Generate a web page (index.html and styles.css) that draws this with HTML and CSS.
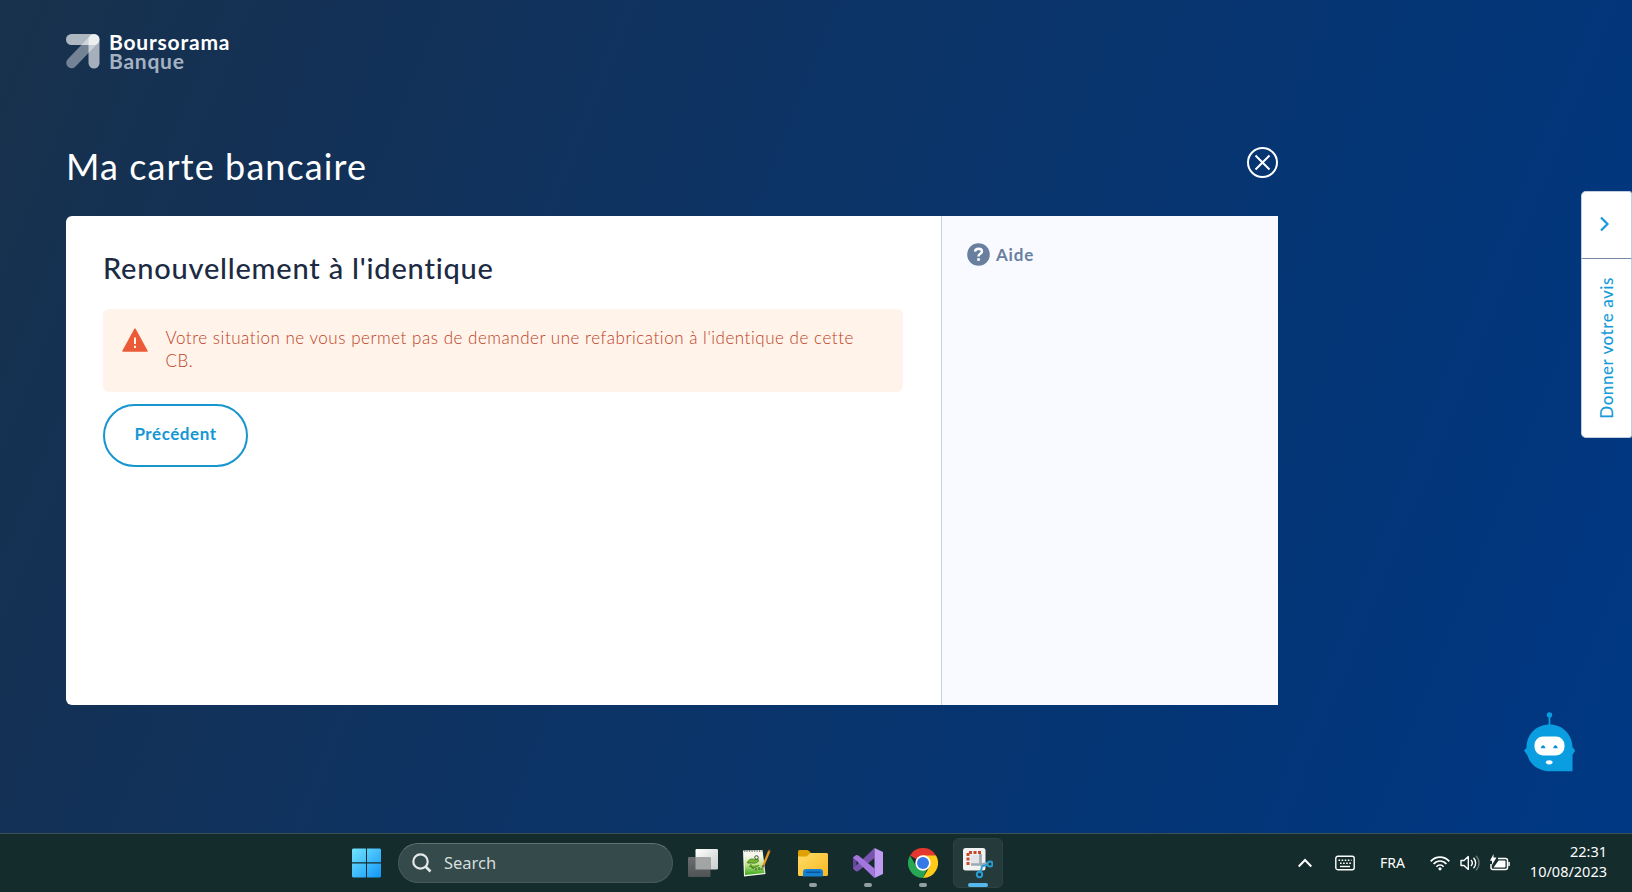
FILE: index.html
```html
<!DOCTYPE html>
<html lang="fr">
<head>
<meta charset="utf-8">
<title>Ma carte bancaire</title>
<link rel="stylesheet" href="styles.css">
</head>
<body>
<div class="screen">
  <main class="page">
    <header class="brand">
      <svg class="brand-mark" width="34" height="35" viewBox="0 0 34 35" fill="none" stroke="#fff" stroke-width="11" stroke-linecap="round">
        <path d="M5.500 5.500H28" stroke-opacity=".65"/>
        <path d="M28 5.500V29" stroke-opacity=".62"/>
        <path d="M28 5.500L5.500 29" stroke-opacity=".4" stroke-width="10.500"/>
      </svg>
      <div class="brand-name"><span class="brand-top">Boursorama</span><span class="brand-sub">Banque</span></div>
    </header>
    <div class="title-row">
      <h1 class="title">Ma carte bancaire</h1>
      <svg class="close" width="32" height="32" viewBox="0 0 32 32" fill="none" stroke="#fff" stroke-width="2">
        <circle cx="16.500" cy="15.500" r="14.500"/><path d="M9.500 8.500l14 14M23.500 8.500L9.500 22.500"/>
      </svg>
    </div>
    <div class="card">
      <section class="content">
        <h2 class="subtitle">Renouvellement à l'identique</h2>
        <div class="alert">
          <svg class="alert-icon" width="26" height="24" viewBox="0 0 26 24">
            <path d="M13 1.200L25 23H1z" fill="#ec5b38" stroke="#ec5b38" stroke-width="1.500" stroke-linejoin="round"/>
            <path d="M13 9.500v6.500M13 17.800v2.200" stroke="#fff3ea" stroke-width="2"/>
          </svg>
          <p class="alert-text">Votre situation ne vous permet pas de demander une refabrication à l'identique de cette<br>CB.</p>
        </div>
        <button class="previous">Précédent</button>
      </section>
      <aside class="help">
        <div class="help-head">
          <svg width="23" height="23" viewBox="0 0 23 23">
            <circle cx="11.500" cy="11.500" r="11.300" fill="#697f9f"/>
            <path d="M8 8.700c.2-2 1.500-3 3.500-3s3.500 1 3.500 2.800c0 2.300-3.500 2.400-3.500 4.900" fill="none" stroke="#fff" stroke-width="2.400"/>
            <path d="M10.200 15.200h2.700v2.600h-2.700z" fill="#fff"/>
          </svg>
          <span class="help-label">Aide</span>
        </div>
      </aside>
    </div>
    <div class="feedback">
      <div class="feedback-toggle">
        <svg width="12" height="16" viewBox="0 0 12 16" fill="none" stroke="#159bd7" stroke-width="2.200"><path d="M2 1.500l6.500 6.500L2 14.500"/></svg>
      </div>
      <div class="feedback-body"><span class="feedback-label">Donner votre avis</span></div>
    </div>
    <svg class="bot" width="52" height="60" viewBox="0 0 52 60">
      <path d="M25.500 4v12" stroke="#0a9de0" stroke-width="1.800"/><circle cx="25.500" cy="2.900" r="2.700" fill="#0a9de0"/>
      <path d="M2.500 36C2.500 22 12.500 12.500 25.500 12.500S48 22 48.500 35l2.700 3.500-2.700 4.500v16.300H27C15 59.300 6 53 3.500 43.500L0 38.500z" fill="#0a9de0"/>
      <rect x="10.500" y="24.500" width="30" height="19" rx="8.500" fill="#fff"/>
      <path d="M16.800 36.300c.8-4 3.800-4 4.600 0zM29.200 36.300c.8-4 3.800-4 4.600 0z" fill="#0a8fd6"/>
      <ellipse cx="25.200" cy="50.300" rx="3.300" ry="2.100" fill="#fff"/>
    </svg>
  </main>
  <footer class="taskbar">
    <div class="apps">
      <div class="slot start">
        <svg width="30" height="30" viewBox="0 0 30 30">
          <defs><linearGradient id="win" x1="0" y1="0" x2="30" y2="30" gradientUnits="userSpaceOnUse"><stop offset="0" stop-color="#73e5fd"/><stop offset="1" stop-color="#0f94f7"/></linearGradient></defs>
          <path d="M1 .5H14v13.700H0V1.500zM15 .5H28l1 1v12.700H15zM0 15.500H14v14H1l-1-1zM15 15.500h14v13l-1 1H15z" fill="url(#win)"/>
        </svg>
      </div>
      <div class="search">
        <svg width="20" height="20" viewBox="0 0 20 20" fill="none" stroke="#e2e8e8" stroke-width="2.200"><circle cx="8.500" cy="8.500" r="7.200"/><path d="M13.500 13.500l5 5" stroke-width="2.600"/></svg>
        <span class="search-label">Search</span>
      </div>
      <div class="slot">
        <svg width="30" height="30" viewBox="0 0 30 30">
          <defs><linearGradient id="tv" x1="0" y1="0" x2="1" y2="1"><stop offset="0" stop-color="#fff"/><stop offset="1" stop-color="#c9cccc"/></linearGradient><linearGradient id="tb" x1="0" y1="0" x2="0" y2="1"><stop offset="0" stop-color="#6b6e6e"/><stop offset="1" stop-color="#505353"/></linearGradient></defs>
          <rect x="7.500" y="1" width="22.500" height="20.500" rx="1.200" fill="url(#tv)"/>
          <rect x="0" y="9" width="22.500" height="20" rx="1.200" fill="url(#tb)"/>
          <path d="M7.500 9h15v12.500h-15z" fill="#a3a5a5"/>
        </svg>
      </div>
      <div class="slot">
        <svg width="30" height="30" viewBox="0 0 30 30">
          <defs><linearGradient id="npp" x1="0" y1="0" x2="0" y2="1"><stop offset=".1" stop-color="#f4f8ea"/><stop offset=".5" stop-color="#c3e58a"/><stop offset="1" stop-color="#38a919"/></linearGradient></defs>
          <path d="M0 2.500l19.500-.5L22.500 26 1 28.500z" fill="#f6f6ec"/>
          <path d="M1.500 7l17.500-1L21.500 25 2 27z" fill="url(#npp)"/>
          <path d="M1 3h18" stroke="#888e85" stroke-width="2" stroke-dasharray="1.200 1.300"/>
          <path d="M4.500 15c1-4 5-5 7-3 2-3 4-1 4 1-2 3-6 2-8 2zM6 18c4 2 7 2 10-1M8 16c-1 2 1 4 3 5" fill="#75b92c" stroke="#3c6a26" stroke-width=".8"/>
          <circle cx="13.500" cy="9.500" r="1.800" fill="#e9f5da" stroke="#29471a" stroke-width=".9"/><path d="M13 20v2.500M16 19v3M17.500 21h2" stroke="#29471a" stroke-width=".9"/>
          <path d="M26.500 2.500L20.500 17" stroke="#e79b22" stroke-width="2.200"/><path d="M27 1.500l-1 2M20.500 17l-1 2.500" stroke="#81462d" stroke-width="1.500"/>
        </svg>
      </div>
      <div class="slot running">
        <svg width="30" height="30" viewBox="0 0 30 30">
          <defs><linearGradient id="fd" x1="0" y1="0" x2="1" y2="1"><stop offset="0" stop-color="#ffdc6a"/><stop offset="1" stop-color="#f8b91f"/></linearGradient></defs>
          <path d="M0 3.500Q0 2 1.500 2H9q1 0 2 1l2 2v6H0z" fill="#dfa000"/>
          <path d="M0 8.500h8.500l4-3.500H28.500q1.500 0 1.500 1.500v20q0 1.500-1.500 1.500h-27Q0 28 0 26.500z" fill="url(#fd)"/>
          <path d="M5 28.500V24q0-3 3-3h14q3 0 3 3v4.500z" fill="#1681d0"/><rect x="8" y="23.500" width="14.500" height="1.600" rx=".8" fill="#07539c"/>
        </svg>
      </div>
      <div class="slot running">
        <svg width="30" height="30" viewBox="0 0 30 30">
          <path d="M0 9.500l3.500-2.500v16L0 20.500z" fill="#69449f"/>
          <path d="M0 20.500L21.500 0v10L6 22.500q-2 1.500-3.500.5z" fill="#7953b0"/>
          <path d="M0 9.500l2.500-2Q4 6.500 6 8l15.500 12.500V30z" fill="#a477df"/>
          <path d="M21.500 0L30 4v22l-8.500 4z" fill="#c19af2"/>
        </svg>
      </div>
      <div class="slot running">
        <svg width="30" height="30" viewBox="0 0 30 30">
          <path d="M15 15L2 7.500A15 15 0 0 1 28 7.500z" fill="#e4382e"/>
          <path d="M15 15h6.500L15 30A15 15 0 0 1 2 7.500L8.500 18.800z" fill="#27a653"/>
          <path d="M15 7.500H28A15 15 0 0 1 15 30l6.500-11.200z" fill="#fdcb18"/>
          <circle cx="15" cy="15" r="7.700" fill="#fff"/><circle cx="15" cy="15" r="6" fill="#3579e8"/>
        </svg>
      </div>
      <div class="slot active">
        <svg width="30" height="32" viewBox="0 0 30 32">
          <rect x="0" y="1" width="22.500" height="22.500" rx="2.500" fill="#f1f2f2"/>
          <path d="M5 18V5.500h13" fill="none" stroke="#c6492a" stroke-width="3" stroke-dasharray="3 1.500"/>
          <path d="M7.500 8h9v9h-9z" fill="#e2e4e6"/>
          <path d="M17.500 7v9l2 4M8 17.500h9l7-1" fill="none" stroke="#9caab2" stroke-width="2.700"/>
          <g fill="none" stroke="#299ed4" stroke-width="2"><circle cx="27" cy="17" r="2.500"/><circle cx="16.500" cy="27.500" r="2.700"/><path d="M24.500 17.700l-6 1.500M17.500 25l1.500-5"/></g>
        </svg>
      </div>
    </div>
    <div class="tray">
      <svg class="chevron" width="14" height="10" viewBox="0 0 14 10" fill="none" stroke="#fff" stroke-width="2"><path d="M.7 8.500L7 2l6.300 6.500"/></svg>
      <svg class="keyboard" width="20" height="16" viewBox="0 0 20 16" fill="none" stroke="#fff"><rect x=".8" y="1.300" width="18.400" height="13.400" rx="2" stroke-width="1.400"/><path d="M3.500 5.200h13M5 8.200h11" stroke-width="1.600" stroke-dasharray="1.600 1.500"/><path d="M5 11.500h10" stroke-width="1.400"/></svg>
      <span class="lang">FRA</span>
      <svg class="wifi" width="20" height="16" viewBox="0 0 20 16" fill="none" stroke="#fff" stroke-width="1.700"><path d="M.7 6.300c5.200-5.600 13.400-5.600 18.600 0M3.600 9c3.600-4 9.200-4 12.800 0M6.400 11.700c2-2.300 5.200-2.300 7.200 0"/><circle cx="10" cy="13.800" r="1.600" fill="#fff" stroke="none"/></svg>
      <svg class="sound" width="20" height="18" viewBox="0 0 20 18" fill="none" stroke="#fff" stroke-width="1.400"><path d="M1 6.500h3L8.300 2.600v12.800L4 11.500H1z" stroke-linejoin="round"/><path d="M11 6c1.600 1.800 1.600 4.200 0 6M13.500 3.800c2.900 3 2.900 7.400 0 10.400"/><path d="M16 1.800c4 4 4 10.400 0 14.400" stroke="#657877"/></svg>
      <svg class="battery" width="20" height="18" viewBox="0 0 20 18"><path d="M8 4.500h7.500q2 0 2 2v7q0 2-2 2H3q-2 0-2-2V10" fill="none" stroke="#fff" stroke-width="1.500"/><path d="M8.500 6.500h6q1 0 1 1v5q0 1-1 1H3.500z" fill="#fff"/><path d="M18.300 8h1.500v4h-1.500z" fill="#fff"/><path d="M3.500 0v3.500H6.500L2 11V6.800H0z" fill="#fff"/></svg>
      <div class="clock"><span class="time">22:31</span><span class="date">10/08/2023</span></div>
    </div>
  </footer>
</div>
</body>
</html>
```
FILE: styles.css
```css
* { box-sizing: border-box; }
body { margin: 0; overflow: hidden; font-family: Lato, "Open Sans", sans-serif; }
h1, h2, p { margin: 0; font-weight: 400; white-space: nowrap; }
svg { display: block; flex: none; }
.screen { width: 1632px; height: 892px; display: flex; flex-direction: column; }

.page {
  position: relative;
  height: 833px;
  padding: 34px 354px 0 66px;
  background: linear-gradient(112deg, #18314c 0%, #133156 18%, #0a346a 52%, #033679 80%, #003884 100%);
}
.brand { display: flex; gap: 9px; height: 40px; }
.brand-name { display: flex; flex-direction: column; font-size: 21px; font-weight: 700; line-height: 19px; margin-top: -2px; }
.brand-top { color: #fff; letter-spacing: .8px; }
.brand-sub { color: #a5b2c4; letter-spacing: .75px; }
.title-row { display: flex; justify-content: space-between; padding-top: 69px; height: 142px; }
.title { color: #fff; font-size: 36px; line-height: 47px; letter-spacing: 1.1px; }
.close { margin-top: 4px; }

.card { display: flex; width: 1212px; height: 489px; background: #fff; border-radius: 6px 0 0 6px; }
.content { width: 875px; padding: 32px 38px 0 37px; }
.subtitle { color: #1c2b43; font-size: 29px; font-weight: 500; line-height: 40px; height: 61px; letter-spacing: .78px; }
.alert { display: flex; gap: 18px; height: 83px; padding: 19px 0 0 18.500px; border-radius: 6px; background: #fff3ea; }
.alert-text { color: #bd4023; font-size: 17px; font-weight: 300; line-height: 23px; margin-top: -2px; letter-spacing: .53px; }
.previous { display: block; margin-top: 12px; width: 145px; height: 63px; padding: 0 0 4px; border: 2px solid #1795cf; border-radius: 32px; background: #fff; color: #1597d5; font: 700 17px Lato, sans-serif; letter-spacing: .55px; }
.help { flex: 1; border-left: 1px solid #c8d4dc; background: #f9faff; padding: 27px 25px; }
.help-head { display: flex; align-items: center; gap: 6px; }
.help-label { color: #697f9f; font-size: 17px; font-weight: 700; line-height: 23px; letter-spacing: .8px; }

.feedback { position: absolute; left: 1581px; top: 191px; width: 51px; height: 247px; display: flex; flex-direction: column; color: #159bd7; }
.feedback-toggle { height: 68px; padding: 24px 0 0 17px; background: #fff; border: 1px solid #c2cddd; border-bottom-color: #7788a8; border-radius: 5px 3px 0 0; }
.feedback-body { flex: 1; display: flex; align-items: center; justify-content: center; background: #fff; border: 1px solid #c2cddd; border-top: 0; border-radius: 0 0 3px 5px; }
.feedback-label { writing-mode: vertical-rl; transform: rotate(180deg); font-size: 17px; font-weight: 500; white-space: nowrap; letter-spacing: .55px; }
.bot { position: absolute; left: 1523.500px; top: 711.500px; }

.taskbar { height: 59px; display: flex; justify-content: space-between; background: #142c2c; border-top: 1px solid #3c5056; font-family: "Noto Sans", "Open Sans", sans-serif; color: #fff; }
.apps { display: flex; gap: 5px; padding: 4px 0 0 342px; height: 54px; }
.slot { position: relative; width: 50px; height: 50px; display: flex; align-items: center; justify-content: center; }
.start { margin-right: 1px; }
.search { width: 275px; height: 40px; margin-top: 5px; padding-left: 13px; display: flex; align-items: center; gap: 12px; border-radius: 20px; background: #354b4b; border: 1px solid #465a5a; border-top-color: #617272; }
.search-label { font-size: 16.500px; line-height: 24px; color: #d5dddd; }
.running::after, .active::after { content: ""; position: absolute; bottom: 1px; left: 21px; width: 8px; height: 4px; border-radius: 2px; background: #92a0a0; }
.active { background: #243a3b; border-radius: 6px; border: 1px solid #2c4344; }
.active::after { left: 14px; bottom: 0; width: 20px; background: #55b7eb; }
.tray { display: flex; align-items: center; padding-right: 25px; height: 57px; }
.chevron { margin-right: 23px; }
.keyboard { margin-right: 25px; }
.lang { width: 25px; margin-right: 25px; font-size: 14px; }
.wifi { margin-right: 10px; }
.sound { margin-right: 10px; }
.clock { width: 97px; display: flex; flex-direction: column; align-items: flex-end; line-height: 20px; font-size: 14.500px; margin-top: -3px; }
```
